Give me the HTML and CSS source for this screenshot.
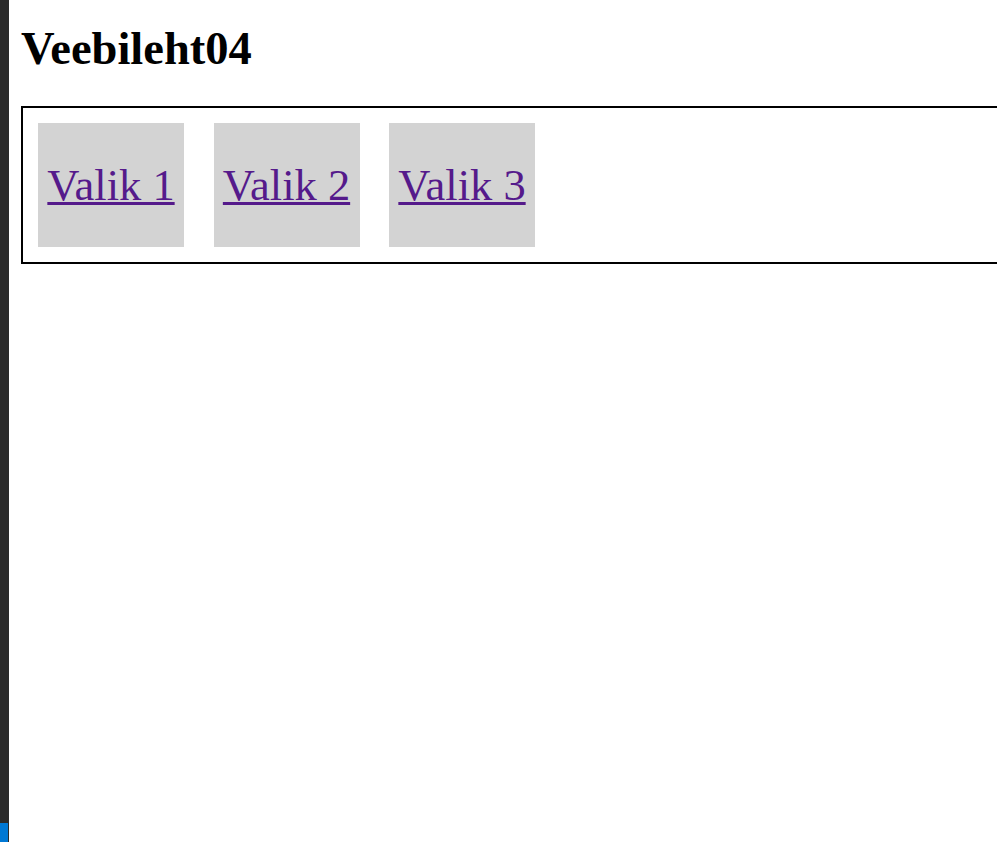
FILE: index.html
```html
<!DOCTYPE html>
<html lang="et">
<head>
<meta charset="utf-8">
<title>Veebileht04</title>
<link rel="stylesheet" href="styles.css">
</head>
<body>
<div class="shell">
  <div class="sidebar"><div class="status"></div></div>
  <main class="page">
    <h1 class="title">Veebileht04</h1>
    <nav class="menu">
      <div class="item"><a href="#">Valik 1</a></div>
      <div class="item"><a href="#">Valik 2</a></div>
      <div class="item"><a href="#">Valik 3</a></div>
    </nav>
  </main>
</div>
</body>
</html>
```
FILE: styles.css
```css
html, body {
  margin: 0;
  padding: 0;
  height: 100%;
  overflow: hidden;
  background: #ffffff;
}
.shell {
  display: flex;
  height: 842px;
  width: 997px;
  overflow: hidden;
}
.sidebar {
  width: 9px;
  flex: none;
  background: #2b2b2b;
  display: flex;
  flex-direction: column;
  justify-content: flex-end;
}
.status {
  width: 8px;
  height: 19px;
  background: #0078d4;
}
.page {
  padding: 0 0 0 12px;
  font-family: "Liberation Serif", "Times New Roman", serif;
  flex: none;
  width: 1200px;
}
.title {
  margin: 0;
  padding-top: 22.5px;
  font-size: 46.5px;
  line-height: 52px;
  font-weight: bold;
  color: #000;
}
.menu {
  margin-top: 31.5px;
  border: 2px solid #000;
  padding: 15px;
  display: flex;
  gap: 29.5px;
  width: 1100px;
}
.item {
  width: 146px;
  height: 124px;
  box-sizing: border-box;
  background: #d3d3d3;
  display: flex;
  align-items: center;
  justify-content: center;
}
.item a {
  font-size: 44.5px;
  color: #551a8b;
  text-decoration: underline;
  text-decoration-thickness: 3px;
  white-space: nowrap;
}
```
